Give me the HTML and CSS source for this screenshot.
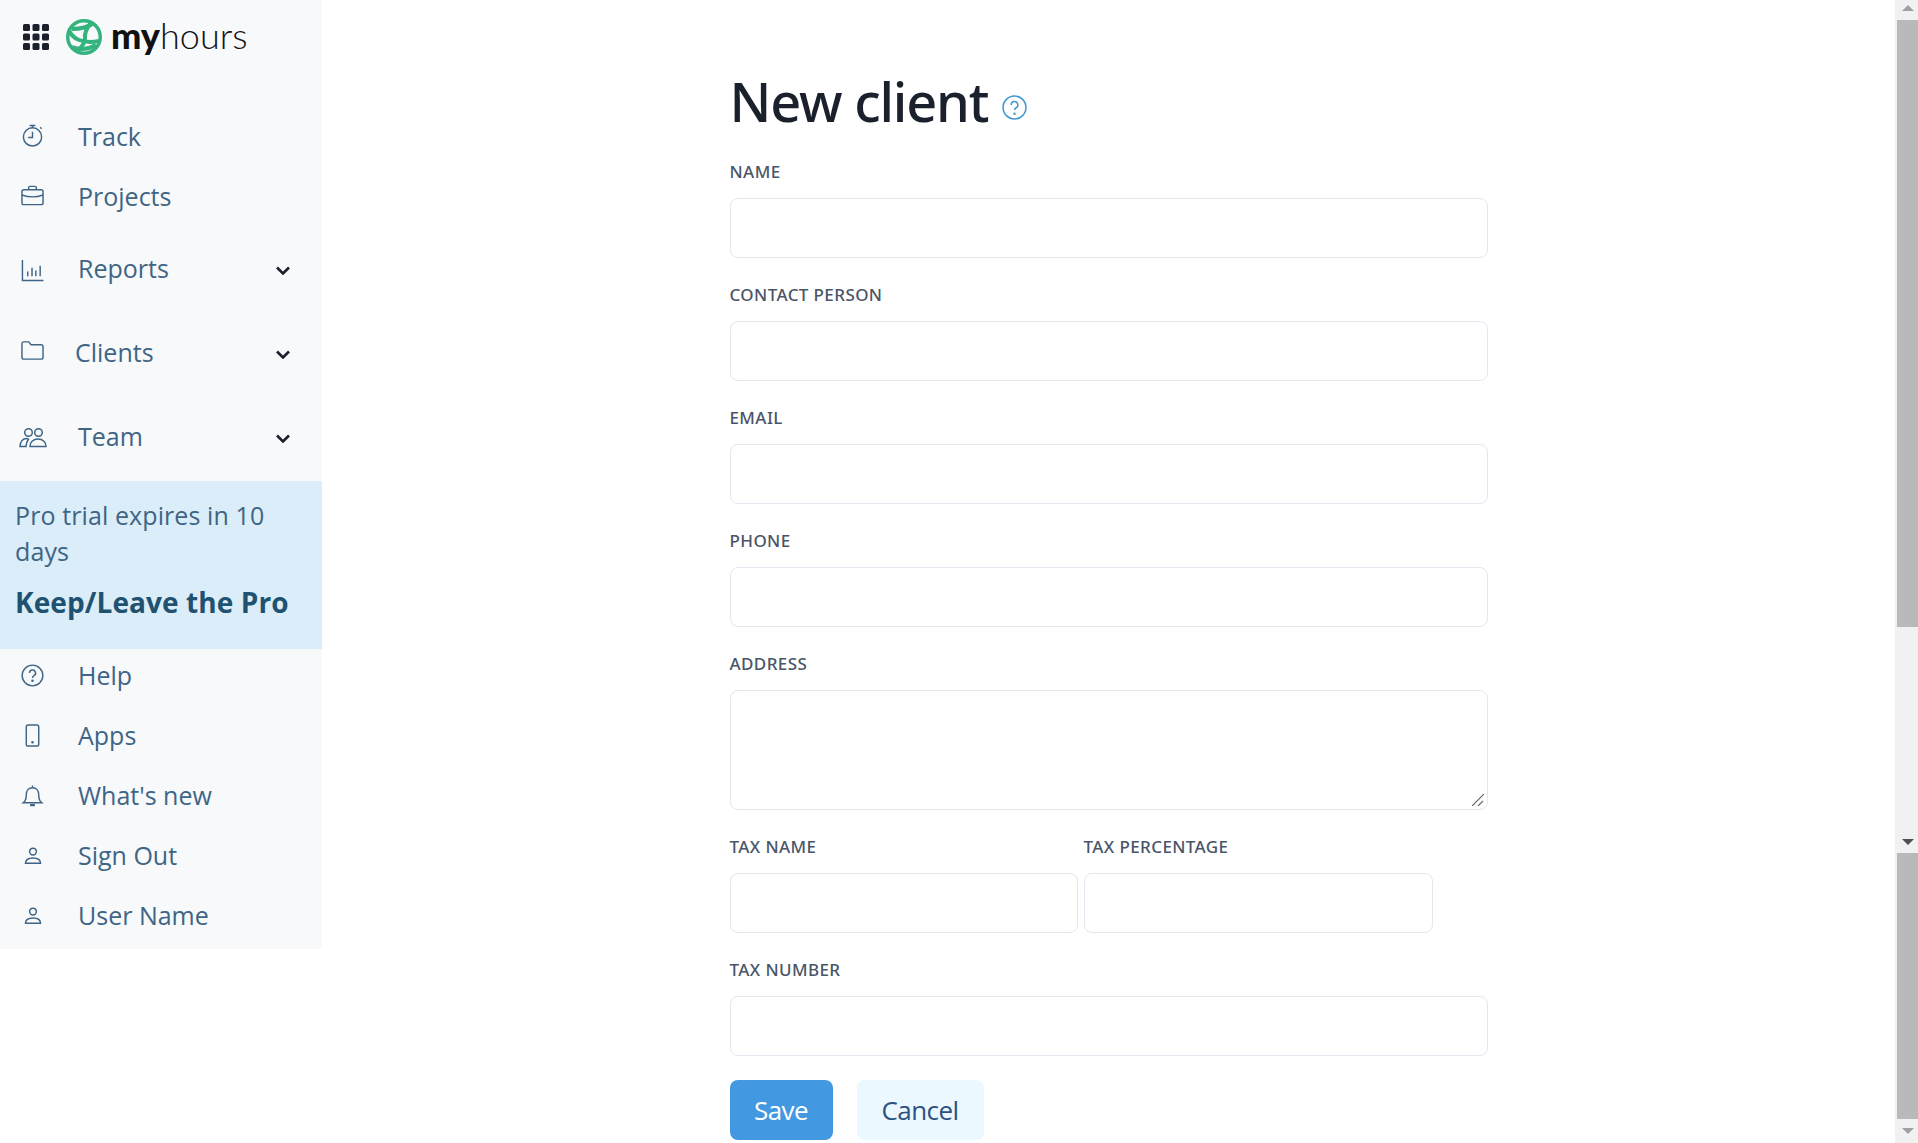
FILE: index.html
```html
<!DOCTYPE html>
<html lang="en">
<head>
    <meta charset="UTF-8">
    <meta name="viewport" content="width=device-width, initial-scale=1.0">
    <title>New client - My Hours</title>
    <link rel="stylesheet" href="styles.css">
</head>
<body>
<div class="page">
    <!-- Sidebar -->
    <aside class="sidebar">
        <div class="brand">
            <svg class="apps-grid" viewBox="0 0 26 26" fill="#1a202c">
                <rect x="0" y="0" width="7" height="7" rx="1.5"/><rect x="9.500" y="0" width="7" height="7" rx="1.5"/><rect x="19" y="0" width="7" height="7" rx="1.5"/>
                <rect x="0" y="9.500" width="7" height="7" rx="1.5"/><rect x="9.500" y="9.500" width="7" height="7" rx="1.5"/><rect x="19" y="9.500" width="7" height="7" rx="1.5"/>
                <rect x="0" y="19" width="7" height="7" rx="1.5"/><rect x="9.500" y="19" width="7" height="7" rx="1.5"/><rect x="19" y="19" width="7" height="7" rx="1.5"/>
            </svg>
            <svg class="globe" viewBox="0 0 36 36">
                <circle cx="18" cy="18" r="18" fill="#34b37e"/>
                <circle cx="18" cy="18" r="14.500" fill="#f7f9fb"/>
                <g fill="none" stroke="#34b37e" stroke-width="4">
                    <path d="M3 11c3 9 14 14 30 11"/>
                    <path d="M6 10c8 0 16-2 22-6"/>
                    <path d="M25 3c-4 6-7 11-6 17 0 5-5 9-8 13"/>
                    <path d="M6 28c8 3 17 2 24-2"/>
                </g>
            </svg>
            <span class="wordmark"><b>my</b>hours</span>
        </div>

        <nav class="nav nav-top">
            <a class="nav-item">
                <svg class="nav-icon" viewBox="0 0 24 24"><circle cx="12" cy="13.500" r="9.500"/><path d="M12 8v6H7.500M9 1.500h6M12 1.500V4M20 3.500l1.500 1.500"/></svg>
                <span>Track</span>
            </a>
            <a class="nav-item projects">
                <svg class="nav-icon" viewBox="0 0 24 24"><rect x="1" y="6" width="22" height="15.500" rx="2"/><path d="M8 6V4a1.500 1.500 0 0 1 1.500-1.500h5A1.500 1.500 0 0 1 16 4v2M1 11.500c7 2.500 15 2.500 22 0"/></svg>
                <span>Projects</span>
            </a>
            <a class="nav-item has-arrow first-arrow">
                <svg class="nav-icon" viewBox="0 0 24 24"><path d="M1.500 1v21.500h22M7 18v-5M11.500 18V9M15.500 18v-6M20 18V7"/></svg>
                <span>Reports</span>
                <svg class="chevron" viewBox="0 0 14 9"><path d="M1 1.500l6 6 6-6"/></svg>
            </a>
            <a class="nav-item has-arrow clients">
                <svg class="nav-icon" viewBox="0 0 24 24"><path d="M1 5a2 2 0 0 1 2-2h5l2.500 3H21a2 2 0 0 1 2 2v11a2 2 0 0 1-2 2H3a2 2 0 0 1-2-2z"/></svg>
                <span>Clients</span>
                <svg class="chevron" viewBox="0 0 14 9"><path d="M1 1.500l6 6 6-6"/></svg>
            </a>
            <a class="nav-item has-arrow last-arrow">
                <svg class="nav-icon nav-icon-wide" viewBox="0 0 28 20"><circle cx="9.500" cy="4.500" r="3.800"/><circle cx="19.500" cy="4.500" r="3.800"/><path d="M1 18.500c0-5 3-8 6.500-8 1 0 1.500.3 2 .8-1.500 2-2.500 4.500-2.500 7.200zM11 18.500c0-4.500 3.500-7.500 8-7.500s8 3 8 7.500z"/></svg>
                <span>Team</span>
                <svg class="chevron" viewBox="0 0 14 9"><path d="M1 1.500l6 6 6-6"/></svg>
            </a>
        </nav>

        <div class="trial">
            <p class="trial-text">Pro trial expires in 10 days</p>
            <a class="trial-link">Keep/Leave the Pro</a>
        </div>

        <nav class="nav nav-bottom">
            <a class="nav-item">
                <svg class="nav-icon" viewBox="0 0 24 24"><circle cx="12" cy="12" r="10.800"/><path d="M8.800 9.500a3.200 3.200 0 1 1 4.800 2.700c-1 .6-1.600 1.200-1.600 2.300"/><circle class="dot" cx="12" cy="17.500" r=".6"/></svg>
                <span>Help</span>
            </a>
            <a class="nav-item">
                <svg class="nav-icon" viewBox="0 0 24 24"><rect x="5.500" y="1" width="13" height="22" rx="2"/><circle class="dot" cx="12" cy="19" r=".6"/></svg>
                <span>Apps</span>
            </a>
            <a class="nav-item">
                <svg class="nav-icon" viewBox="0 0 24 24"><path d="M2.500 19.500c2-1.500 3-4 3-8 0-4.500 2.500-7.500 6.500-7.500s6.500 3 6.500 7.500c0 4 1 6.500 3 8zM12 1.500V4"/><path class="bell-foot" d="M9.500 22h5"/></svg>
                <span>What's new</span>
            </a>
            <a class="nav-item">
                <svg class="nav-icon nav-icon-small" viewBox="0 0 24 24"><circle cx="12" cy="6" r="4.500"/><path d="M2 21.500c0-4.500 4-7 10-7s10 2.500 10 7z"/></svg>
                <span>Sign Out</span>
            </a>
            <a class="nav-item">
                <svg class="nav-icon nav-icon-small" viewBox="0 0 24 24"><circle cx="12" cy="6" r="4.500"/><path d="M2 21.500c0-4.500 4-7 10-7s10 2.500 10 7z"/></svg>
                <span>User Name</span>
            </a>
        </nav>
    </aside>

    <!-- Form -->
    <main class="main">
        <form class="client-form">
            <h1 class="title">New client
                <svg class="title-help" viewBox="0 0 24 24"><circle cx="12" cy="12" r="11"/><path d="M8.800 9.500a3.200 3.200 0 1 1 4.800 2.700c-1 .6-1.600 1.200-1.600 2.300"/><circle cx="12" cy="18" r=".5"/></svg>
            </h1>

            <div class="field">
                <label class="field-label">Name</label>
                <input class="input" type="text">
            </div>
            <div class="field">
                <label class="field-label">Contact person</label>
                <input class="input" type="text">
            </div>
            <div class="field">
                <label class="field-label">Email</label>
                <input class="input" type="text">
            </div>
            <div class="field">
                <label class="field-label">Phone</label>
                <input class="input" type="text">
            </div>
            <div class="field">
                <label class="field-label">Address</label>
                <div class="textarea-wrap">
                    <textarea class="input textarea"></textarea>
                    <svg class="grip" viewBox="0 0 12 12"><path d="M0 12L12 0M6 12l5-5"/></svg>
                </div>
            </div>
            <div class="field-row">
                <div class="field field-half">
                    <label class="field-label">Tax name</label>
                    <input class="input" type="text">
                </div>
                <div class="field field-half">
                    <label class="field-label">Tax percentage</label>
                    <input class="input" type="text">
                </div>
            </div>
            <div class="field field-last">
                <label class="field-label">Tax number</label>
                <input class="input" type="text">
            </div>

            <div class="actions">
                <button class="btn btn-save" type="button">Save</button>
                <button class="btn btn-cancel" type="button">Cancel</button>
            </div>
        </form>
    </main>

    <!-- Scrollbars -->
    <div class="scrollbar">
        <div class="sb-arrow sb-up"><i class="tri-up"></i></div>
        <div class="sb-thumb sb-thumb-top"></div>
        <div class="sb-track"></div>
        <div class="sb-arrow sb-down-mid"><i class="tri-down"></i></div>
        <div class="sb-thumb sb-thumb-bottom"></div>
        <div class="sb-arrow sb-down"><i class="tri-down tri-light"></i></div>
    </div>
</div>
</body>
</html>
```

FILE: styles.css
```css
* {
    box-sizing: border-box;
}

html, body {
    height: 100%;
    margin: 0;
    overflow: hidden;
}

body {
    background-color: #fff;
    color: #1a202c;
    font-family: "Open Sans", "Noto Sans", sans-serif;
}

.page {
    display: flex;
    height: 100vh;
    overflow: hidden;
}

/* Sidebar */
.sidebar {
    flex: 0 0 322px;
    align-self: flex-start;
    background-color: #f8f9fb;
    height: 949px;
}

.brand {
    display: flex;
    align-items: center;
    height: 74px;
    padding-left: 23px;
}

.apps-grid {
    width: 26px;
    height: 26px;
}

.globe {
    width: 36px;
    height: 36px;
    margin-left: 17px;
}

.wordmark {
    margin-left: 9px;
    padding-bottom: 5px;
    font-family: "Lato", sans-serif;
    font-size: 36px;
    font-weight: 300;
    color: #111;
    line-height: 1;
}

.wordmark b {
    font-weight: 900;
}

.nav-top {
    padding-top: 44px;
}

.nav-bottom {
    padding-top: 8px;
}

.nav-item {
    display: flex;
    align-items: center;
    height: 36px;
    margin-bottom: 24px;
    padding-left: 21px;
    color: #3e6585;
    font-size: 25px;
    letter-spacing: 0;
    line-height: 36px;
}

.nav-item span {
    margin-left: 34px;
}

.nav-bottom .nav-item:last-child {
    margin-bottom: 0;
}

.nav-icon {
    flex: 0 0 23px;
    width: 23px;
    height: 23px;
    margin-top: -1px;
    fill: none;
    stroke: #3e6585;
    stroke-width: 1.5;
}

.nav-bottom .nav-icon {
    margin-top: 1px;
}

.nav-icon .dot {
    fill: #3e6585;
}

.bell-foot {
    stroke-width: 2.4;
}

.nav-icon-wide {
    flex-basis: 28px;
    width: 28px;
    height: 20px;
    margin-top: 4px;
    margin-left: -2px;
    margin-right: -3px;
}

.nav-bottom .nav-icon-small {
    flex-basis: 18px;
    width: 18px;
    height: 18px;
    margin-top: 1px;
    margin-left: 3px;
    margin-right: 2px;
    stroke-width: 2;
}

.chevron {
    width: 14px;
    height: 9px;
    margin-left: auto;
    margin-right: 32px;
    margin-top: 5px;
    fill: none;
    stroke: #1a202c;
    stroke-width: 2.6;
}

.first-arrow {
    margin-top: 36px;
    margin-bottom: 48px;
}

.first-arrow .nav-icon {
    margin-top: 5px;
}

.clients {
    margin-bottom: 48px;
}

.clients span {
    margin-left: 31px;
}

.clients .nav-icon {
    margin-top: -3px;
}

.last-arrow {
    margin-bottom: 27px;
}

/* Trial box */
.trial {
    height: 168px;
    padding: 16px 15px 0;
    background-color: #dbedf8;
}

.trial-text {
    margin: 0;
    color: #3e6585;
    font-size: 25px;
    letter-spacing: 0.1px;
    line-height: 36px;
}

.trial-link {
    display: block;
    margin-top: 15px;
    color: #1f5270;
    font-size: 28px;
    font-weight: 700;
    letter-spacing: 0.1px;
    line-height: 36px;
}

/* Form */
.main {
    flex: 1;
    min-width: 0;
}

.client-form {
    width: 758px;
    margin: 0 auto;
}

.title {
    display: flex;
    align-items: center;
    height: 160px;
    margin: 0;
    padding-top: 53px;
    padding-bottom: 12px;
    font-family: "Noto Sans", "Open Sans", sans-serif;
    font-size: 54px;
    font-weight: 500;
    letter-spacing: -1.2px;
}

.title-help {
    width: 25px;
    height: 25px;
    margin-left: 14px;
    margin-top: 14px;
    fill: none;
    stroke: #4299d1;
    stroke-width: 1.5;
}

.field {
    margin-bottom: 25px;
}

.field-last {
    margin-bottom: 24px;
}

.field-label {
    display: block;
    height: 24px;
    margin-bottom: 14px;
    color: #4a5568;
    font-family: "Noto Sans", "Open Sans", sans-serif;
    font-size: 17px;
    font-weight: 500;
    letter-spacing: 0.4px;
    line-height: 24px;
    text-transform: uppercase;
}

.input {
    display: block;
    width: 100%;
    height: 60px;
    padding: 0 16px;
    background-color: #fff;
    border: 1px solid #e2e8f0;
    border-radius: 8px;
    outline: none;
}

.textarea-wrap {
    position: relative;
}

.textarea {
    height: 120px;
    resize: none;
}

.grip {
    position: absolute;
    right: 4px;
    bottom: 4px;
    width: 12px;
    height: 12px;
    fill: none;
    stroke: #666;
    stroke-width: 1.2;
}

.field-row {
    display: flex;
    gap: 6px;
}

.field-half {
    width: 348px;
}

.field-half + .field-half {
    width: 349px;
}

.actions {
    display: flex;
    gap: 24px;
}

.btn {
    height: 60px;
    border: none;
    border-radius: 8px;
    font-family: inherit;
    font-size: 26px;
    letter-spacing: -0.6px;
    cursor: pointer;
}

.btn-save {
    width: 103px;
    background-color: #4299e1;
    color: #fff;
}

.btn-cancel {
    width: 127px;
    background-color: #ebf8ff;
    color: #2c5282;
}

/* Scrollbars */
.scrollbar {
    display: flex;
    flex-direction: column;
    flex: 0 0 23px;
    height: 100vh;
    background-color: #f1f1f1;
}

.sb-arrow {
    display: flex;
    align-items: center;
    justify-content: center;
    padding-left: 2px;
}

.sb-up {
    height: 20px;
    padding-bottom: 5px;
}

.sb-track {
    flex: 1;
}

.sb-down-mid {
    height: 20px;
    padding-bottom: 2px;
}

.sb-down {
    height: 24px;
}

.sb-thumb {
    margin-left: 2px;
    background-color: #b9b9b9;
}

.sb-thumb-top {
    height: 607px;
}

.sb-thumb-bottom {
    height: 266px;
}

.tri-up, .tri-down {
    width: 0;
    height: 0;
    border-left: 6px solid transparent;
    border-right: 6px solid transparent;
}

.tri-up {
    border-bottom: 6px solid #a0a0a0;
}

.tri-down {
    border-top: 6px solid #505050;
}

.tri-light {
    border-top-color: #a0a0a0;
}
```
